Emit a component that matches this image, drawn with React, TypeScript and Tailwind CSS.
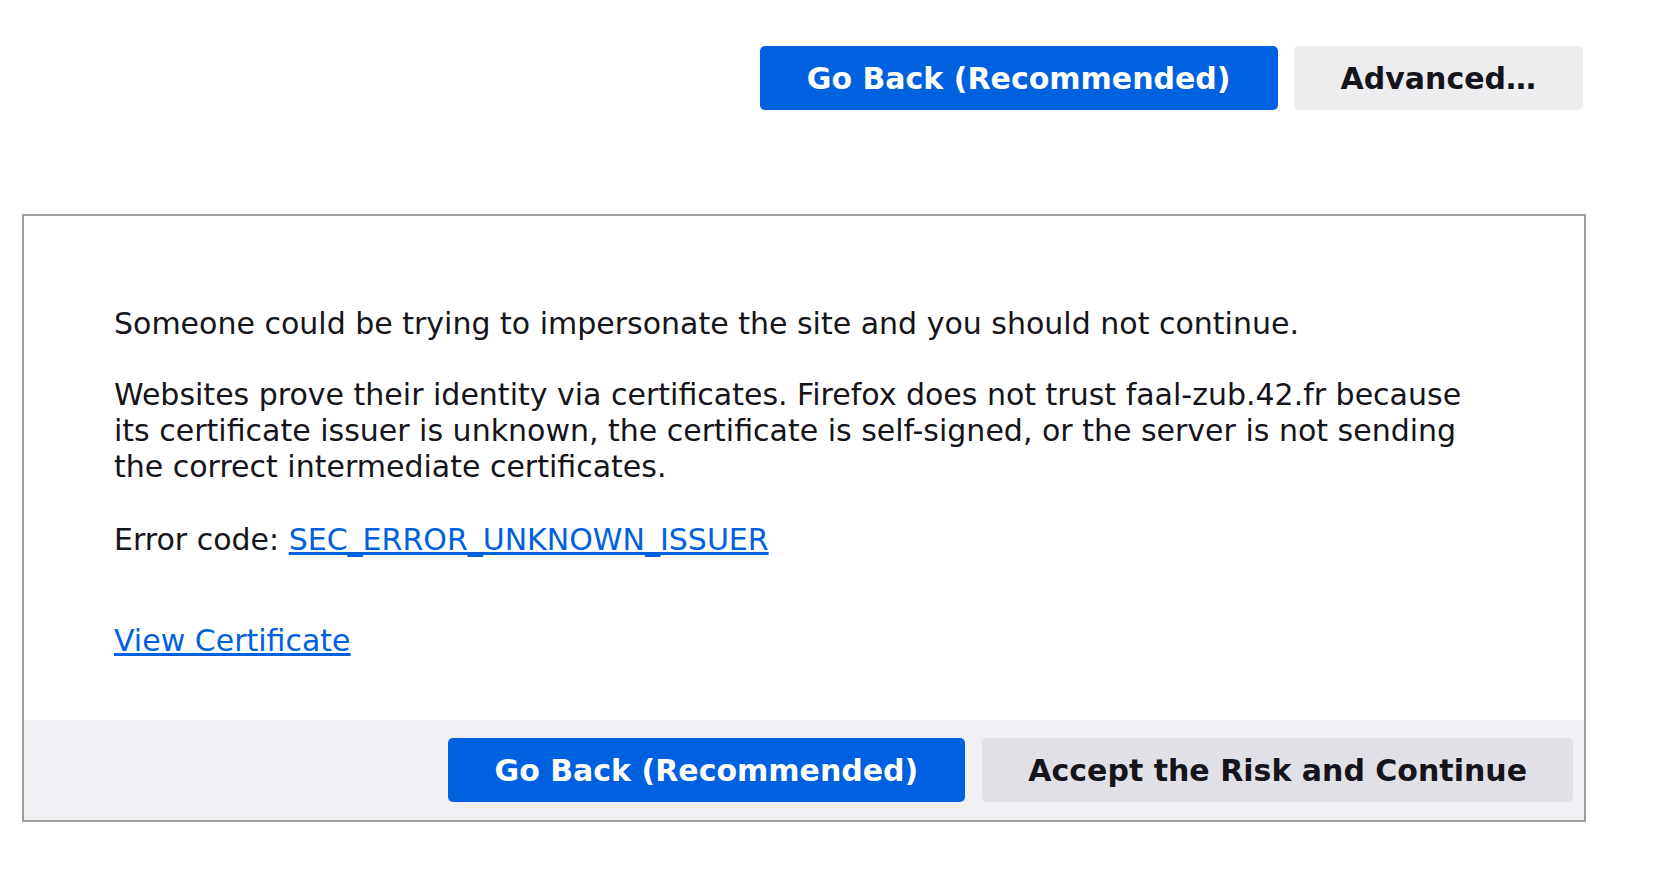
export default function App() {
  return (
    <div className="min-h-screen bg-white text-[#15141a] font-['DejaVu_Sans',sans-serif]">
      <div className="ml-[22px] w-[1564px] pt-[46px]">
        {/* Top actions */}
        <div className="flex justify-end gap-[16px] pr-[3px]">
          <button className="h-[64px] px-[47px] rounded-[5px] bg-[#0061e0] text-white text-[30px] font-bold">
            Go Back (Recommended)
          </button>
          <button className="h-[64px] px-[47px] rounded-[5px] bg-[#ededf0] text-[#15141a] text-[30px] font-bold">
            Advanced…
          </button>
        </div>

        {/* Advanced panel */}
        <div className="mt-[104px] border-2 border-[#9e9e9e]">
          <div className="pl-[90px] pr-[100px] pt-[90px] pb-[61px] text-[30px] leading-[36px]">
            <p>Someone could be trying to impersonate the site and you should not continue.</p>
            <p className="mt-[35px]">
              Websites prove their identity via certificates. Firefox does not trust faal-zub.42.fr because its
              certificate issuer is unknown, the certificate is self-signed, or the server is not sending the correct
              intermediate certificates.
            </p>
            <p className="mt-[37px]">
              Error code:{" "}
              <a href="#" className="text-[#0061e0] underline">
                SEC_ERROR_UNKNOWN_ISSUER
              </a>
            </p>
            <p className="mt-[65px]">
              <a href="#" className="text-[#0061e0] underline">
                View Certificate
              </a>
            </p>
          </div>
          <div className="flex h-[100px] items-center justify-end gap-[17px] bg-[#f0f0f4] pr-[11px]">
            <button className="h-[64px] px-[47px] rounded-[5px] bg-[#0061e0] text-white text-[30px] font-bold">
              Go Back (Recommended)
            </button>
            <button className="h-[64px] px-[46px] rounded-[5px] bg-[#e0e0e6] text-[#15141a] text-[30px] font-bold">
              Accept the Risk and Continue
            </button>
          </div>
        </div>
      </div>
    </div>
  );
}
